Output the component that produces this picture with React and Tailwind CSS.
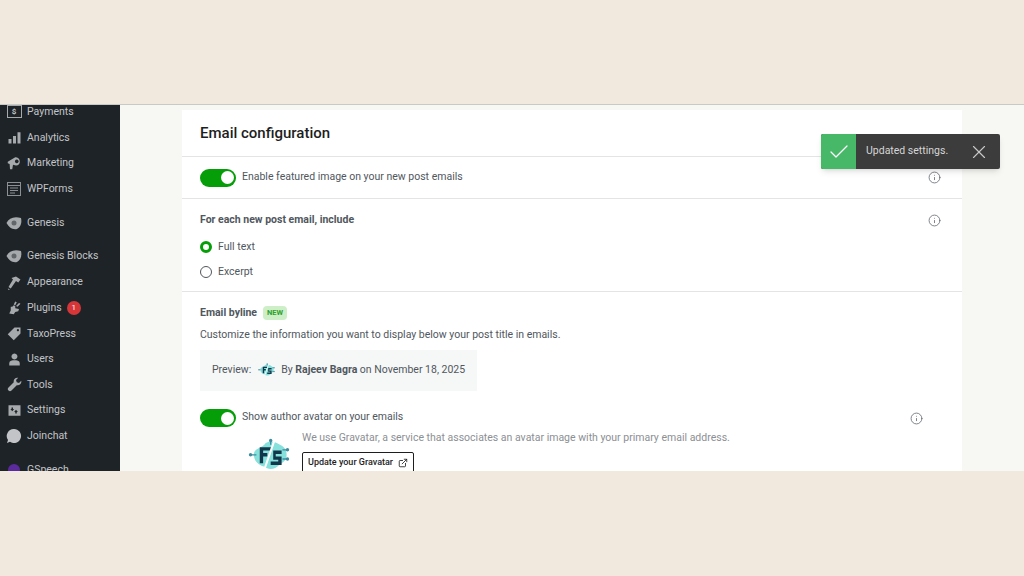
import { Check, X, ExternalLink, Info } from 'lucide-react';

const Avatar = ({ size }) => (
    <svg width={size} height={size * 0.8} viewBox="0 0 50 40" className="shrink-0">
        <path d="M7 20 C7 11 17 13 21 6 C27 2 33 5 38 8 C45 11 46 16 46 20 C46 27 42 29 37 32 C32 38 24 38 19 34 C12 32 7 27 7 20Z" fill="#86e0dc" />
        <path d="M14 11h14v4h-10v3h5v4h-5v8h-4z" fill="#12364a" />
        <path d="M30 15h10v4h-7v3h7v10h-13v-4h9v-2h-6z" fill="#12364a" />
        <path d="M31 4 L20 36" stroke="#ffffff" strokeWidth="2.5" />
        <path d="M2 20h8M41 14h7M41 25h7M27 3v5" stroke="#3d8c9e" strokeWidth="1.5" />
        <circle cx="3" cy="20" r="2" fill="#3d8c9e" />
        <circle cx="47" cy="14" r="2" fill="#3d8c9e" />
        <circle cx="47" cy="25" r="2" fill="#3d8c9e" />
        <circle cx="27" cy="3" r="2" fill="#3d8c9e" />
    </svg>
);

const Blob = () => (
    <svg width="16" height="14" viewBox="0 0 16 14">
        <path d="M0.5 7 C3 2 8 0 15 2 C16 6 15 11 11 13 C6 14 3 11 0.5 7Z" fill="#a7aaad" />
        <circle cx="8" cy="7" r="2.5" fill="#60666a" />
    </svg>
);

const Solid = ({ d, children }) => (
    <svg width="15" height="15" viewBox="0 0 20 20" fill="#a7aaad">
        {d && <path d={d} />}
        {children}
    </svg>
);

const menu = [
    { label: 'Payments', mt: '', icon: <span className="flex h-[13px] w-[15px] items-center justify-center border-[1.5px] border-[#a7aaad] text-[8px] font-bold leading-none">$</span> },
    { label: 'Analytics', mt: '', icon: <Solid d="M2 12h4v6H2zM8 8h4v10H8zM14 3h4v15h-4z" /> },
    { label: 'Marketing', mt: '', icon: <Solid d="M1 9l10-6a6 6 0 0 1 6 5 5 5 0 0 1-5 6l-4-1-1 6H4l-.5-7L1 11zM13 6a2.5 2.5 0 1 0 .1 0z" /> },
    { label: 'WPForms', mt: '', icon: <svg width="14" height="14" viewBox="0 0 14 14" fill="none" stroke="#8c8f94"><rect x="0.5" y="0.5" width="13" height="13" /><path d="M0 3.5h14M3 6h8M3 8.5h8M3 11h5" /></svg> },
    { label: 'Genesis', mt: 'mt-[9px]', icon: <Blob /> },
    { label: 'Genesis Blocks', mt: 'mt-[7px]', icon: <Blob /> },
    { label: 'Appearance', mt: 'mt-[1px]', icon: <Solid d="M12 2l6 4-3 4-3-2-7 10-3-2 6-10-2-2 3-1zM1 18l3 1-2 1z" /> },
    { label: 'Plugins', mt: '', icon: <Solid d="M3 18l2-4V9h2l2-2 2 1v3l5 1-1 3-4 1-2 3zM11 2l2 1-2 4-2-1zM16 4l2 1-4 4-2-1z" />, badge: 1 },
    { label: 'TaxoPress', mt: '', icon: <Solid d="M10 2h8v8l-9 9-8-8zM14.5 4a1.5 1.5 0 1 0 .1 0z" /> },
    { label: 'Users', mt: '', icon: <Solid d="M10 2a4 4 0 1 1-.1 0zM3 18v-3c0-3 3-4 5-4h4c2 0 5 1 5 4v3z" /> },
    { label: 'Tools', mt: '', icon: <Solid d="M14 1a5 5 0 0 0-5 6L2 14a2.5 2.5 0 0 0 4 4l7-7a5 5 0 0 0 6-6l-3 3-3-1-1-3 3-3z" /> },
    { label: 'Settings', mt: '', icon: <Solid d="M2 3h16v14H2zM6 6v2H4.5L7 11l2.5-3H8V6zM13 14v-2h1.5L12 9l-2.5 3H11v2z" /> },
    { label: 'Joinchat', mt: '', icon: <svg width="16" height="16" viewBox="0 0 16 16" fill="#c3c4c7"><path d="M8 1a7 7 0 1 1-4 12.7L1 15l1-3A7 7 0 0 1 8 1z" /></svg> },
    { label: 'GSpeech', mt: 'mt-2', icon: <span className="block h-[12px] w-[12px] rounded-full bg-[#5b2a9d]" /> },
];

const Toggle = () => (
    <span className="flex h-[18px] w-9 shrink-0 items-center justify-end rounded-full bg-[#069e08] pr-[2px]">
        <span className="h-[13px] w-[13px] rounded-full bg-white" />
    </span>
);

const InfoIcon = ({ className }) => <Info size={13} strokeWidth={1.5} className={`text-[#646970] ${className}`} />;

export default function App() {
    return (
        <div className="h-[576px] w-[1024px] overflow-hidden bg-[#f1e9dd] pt-[104px] font-['Roboto',sans-serif]">
            <div className="relative flex h-[367px] overflow-hidden border-t border-[#c9c9c5] bg-[#f7f7f4]">
                <aside className="h-full w-[120px] shrink-0 overflow-hidden bg-[#1d2327] text-[#c3c4c7]">
                    <div className="-mt-[6px]">
                        {menu.map((item) => (
                            <div key={item.label} className={`flex h-[25.6px] items-center ${item.mt}`}>
                                <span className="flex w-[27px] shrink-0 items-center justify-center pl-[1px]">{item.icon}</span>
                                <span className="whitespace-nowrap text-[10.5px]">{item.label}</span>
                                {item.badge && (
                                    <span className="ml-[5px] flex h-[14px] w-[14px] items-center justify-center rounded-full bg-[#d63638] text-[8px] text-white">{item.badge}</span>
                                )}
                            </div>
                        ))}
                    </div>
                </aside>
                <main className="min-w-0 flex-1 pl-[62px] pt-[5px]">
                    <div className="w-[780px] bg-white text-[#50575e]">
                        <div className="flex h-[47px] items-center border-b border-[#e4e4e4] px-[18px]">
                            <h2 className="text-[15px] font-medium text-[#1e1e1e]">Email configuration</h2>
                        </div>
                        <div className="relative flex h-[42px] items-center gap-1.5 border-b border-[#e4e4e4] px-[18px]">
                            <Toggle />
                            <span className="pb-[2px] text-[10.5px]">Enable featured image on your new post emails</span>
                            <InfoIcon className="absolute right-[21px] top-[14px]" />
                        </div>
                        <div className="relative h-[93px] border-b border-[#e4e4e4] px-[18px] pt-[13px]">
                            <h3 className="text-[10.5px] font-bold leading-4 text-[#50575e]">For each new post email, include</h3>
                            <InfoIcon className="absolute right-[21px] top-[15px]" />
                            <label className="mt-[7px] flex h-[24px] items-center gap-1.5 text-[10.5px]">
                                <span className="h-3 w-3 rounded-full border-[3px] border-[#069e08] bg-white" />
                                Full text
                            </label>
                            <label className="flex h-[25px] items-center gap-1.5 text-[10.5px]">
                                <span className="h-3 w-3 rounded-full border border-[#50575e] bg-white" />
                                Excerpt
                            </label>
                        </div>
                        <div className="px-[18px] pt-[13px]">
                            <div className="flex items-center gap-[6px]">
                                <h3 className="text-[10.5px] font-bold leading-4">Email byline</h3>
                                <span className="rounded-sm bg-[#cdeec7] px-1 py-[2px] text-[7.5px] font-bold leading-[10px] text-[#2fa12f]">NEW</span>
                            </div>
                            <p className="mt-[6px] text-[10.5px] leading-4">Customize the information you want to display below your post title in emails.</p>
                            <div className="mt-[7px] flex h-[41px] w-[277px] items-center bg-[#f6f7f7] pb-[2px] pl-3 text-[10.5px]">
                                <span>Preview:</span>
                                <span className="ml-[7px] mr-[6px]"><Avatar size={17} /></span>
                                <span>By <strong className="font-bold">Rajeev Bagra</strong> on November 18, 2025</span>
                            </div>
                            <div className="relative mt-[18px] flex items-center gap-1.5">
                                <Toggle />
                                <span className="pb-[2px] text-[10.5px]">Show author avatar on your emails</span>
                                <InfoIcon className="absolute right-[21px] top-[3px]" />
                            </div>
                            <div className="mt-[3px] flex pl-[48px]">
                                <div className="mt-[8px] w-[54px]"><Avatar size={42} /></div>
                                <div>
                                    <p className="text-[10.5px] leading-4 text-[#8c8f94]">We use Gravatar, a service that associates an avatar image with your primary email address.</p>
                                    <button className="mt-[6px] flex h-[22px] items-center gap-[5px] rounded-[2px] border border-[#1e1e1e] px-[5px] text-[9px] font-medium text-[#1e1e1e]">
                                        Update your Gravatar
                                        <ExternalLink size={10} />
                                    </button>
                                </div>
                            </div>
                        </div>
                    </div>
                </main>
                <div className="absolute left-[821px] top-[29px] flex h-[35px] w-[179px] items-center overflow-hidden rounded-[2px] bg-[#3c3c3c] shadow-md">
                    <span className="flex h-full w-[35px] shrink-0 items-center justify-center bg-[#46b868] text-white">
                        <Check size={24} strokeWidth={1.25} />
                    </span>
                    <span className="ml-[10px] flex-1 pb-[2px] text-[10.5px] text-[#d6d6d6]">Updated settings.</span>
                    <X size={22} strokeWidth={1.25} className="mr-[10px] text-[#c9c9c9]" />
                </div>
            </div>
        </div>
    );
}
